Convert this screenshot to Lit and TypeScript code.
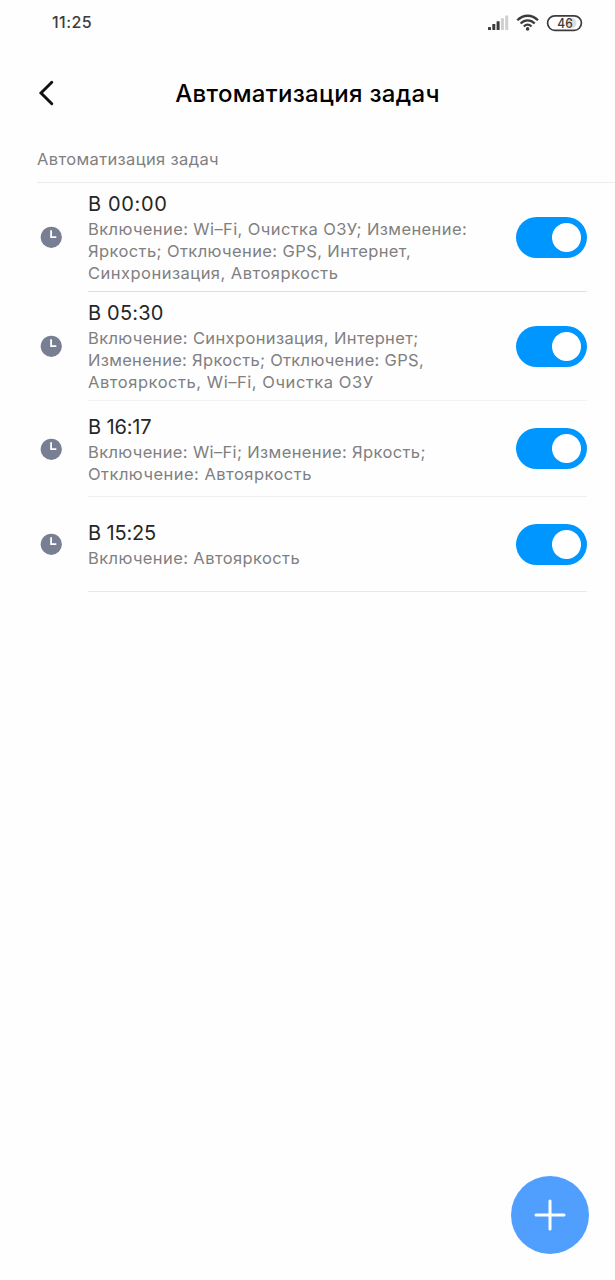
import { LitElement, html, css, svg } from "lit";
import { customElement, property, state } from "lit/decorators.js";

interface Line { text: string; track: number; }
interface Task { title: string; track: number; height: number; divider: string; lines: Line[]; on: boolean; }

@customElement("task-switch")
class TaskSwitch extends LitElement {
  @property({ type: Boolean }) on = false;
  static styles = css`
    :host { display: block; flex: none; }
    .track { box-sizing: border-box; width: 71px; height: 41px; border-radius: 21px; background: #dcdcdc; padding: 6px; display: flex; cursor: pointer; }
    .track.on { background: #0096ff; justify-content: flex-end; }
    .knob { width: 29px; height: 29px; border-radius: 50%; background: #fff; }
  `;
  render() {
    return html`<div class="track ${this.on ? "on" : ""}" role="switch" aria-checked=${this.on}><div class="knob"></div></div>`;
  }
}

@customElement("app-root")
class AppRoot extends LitElement {
  @state() tasks: Task[] = [
    { title: "В 00:00", track: 0.65, height: 108, divider: "#e0e0e0", on: true, lines: [
      { text: "Включение: Wi–Fi, Очистка ОЗУ; Изменение:", track: 0.4 },
      { text: "Яркость; Отключение: GPS, Интернет,", track: 0.4 },
      { text: "Синхронизация, Автояркость", track: 0.48 }] },
    { title: "В 05:30", track: 0.2, height: 108, divider: "#f2f2f2", on: true, lines: [
      { text: "Включение: Синхронизация, Интернет;", track: 0.36 },
      { text: "Изменение: Яркость; Отключение: GPS,", track: 0.3 },
      { text: "Автояркость, Wi–Fi, Очистка ОЗУ", track: 0.55 }] },
    { title: "В 16:17", track: -0.15, height: 95, divider: "#f0f0f0", on: true, lines: [
      { text: "Включение: Wi–Fi; Изменение: Яркость;", track: 0.36 },
      { text: "Отключение: Автояркость", track: 0.47 }] },
    { title: "В 15:25", track: -0.15, height: 94, divider: "#e9e9e9", on: true, lines: [
      { text: "Включение: Автояркость", track: 0.4 }] },
  ];

  static styles = css`
    :host { display: block; font-family: Inter, "Noto Sans", sans-serif; color: #000; }
    .screen { box-sizing: border-box; height: 1280px; background: #fefefe; display: flex; flex-direction: column; overflow: hidden; }
    .status { height: 46px; padding: 0 31px 0 52px; display: flex; align-items: center; justify-content: space-between; flex: none; }
    .time { font-size: 16px; font-weight: 500; letter-spacing: 0.45px; line-height: 44px; height: 46px; color: #3c3c3c; }
    .indicators { display: block; }
    .level { font-size: 13px; font-weight: 500; fill: #3c3c3c; }
    .header { height: 94px; padding: 0 36px; display: grid; grid-template-columns: 24px 1fr 24px; align-items: center; flex: none; }
    .back { display: block; }
    .heading { margin: 0; font-size: 24px; font-weight: 500; letter-spacing: 0.32px; text-align: center; white-space: nowrap; line-height: 32px; padding-top: 1px; }
    .section { height: 42px; margin-left: 37px; border-bottom: 1px solid #ececec; font-size: 16.5px; line-height: 38px; letter-spacing: 0.36px; color: #808080; flex: none; }
    .task { display: flex; padding: 0 28px 0 40px; flex: none; }
    .icon { width: 48px; flex: none; display: flex; align-items: center; }
    .body { flex: 1; display: flex; align-items: center; justify-content: space-between; border-bottom: 1px solid; }
    .title { font-size: 20px; line-height: 28px; color: #262626; white-space: nowrap; }
    .line { font-size: 16.5px; line-height: 22px; color: #808080; white-space: nowrap; }
    .spacer { flex: 1; }
    .actions { display: flex; justify-content: flex-end; padding: 0 26px 26px 0; }
    .add { width: 78px; height: 78px; border-radius: 50%; background: #509fff; display: flex; align-items: center; justify-content: center; cursor: pointer; }
  `;

  private bars() {
    return [0, 1, 2, 3, 4].map(i => {
      const h = 3 + i * 2.9;
      return svg`<rect x=${1 + i * 4.3} y=${17 - h} width="3" height=${h} rx="0.5" fill=${i < 3 ? "#3c3c3c" : "#cfcfcf"} />`;
    });
  }

  render() {
    return html`
      <div class="screen">
        <div class="status">
          <div class="time">11:25</div>
          <svg class="indicators" width="97" height="20" viewBox="0 0 97 20">
            ${this.bars()}
            <g fill="none" stroke="#3c3c3c" stroke-width="2.3">
              <path d="M30.3 7.3C36.3 1.2 45 1.2 51 7.3" />
              <path d="M33.6 10.5C37.8 6.3 43.5 6.3 47.7 10.5" />
              <path d="M36.8 13.5C39.2 11.2 42.1 11.2 44.5 13.5" />
            </g>
            <circle cx="40.6" cy="15.9" r="1.8" fill="#3c3c3c" />
            <circle cx="84.5" cy="10" r="5" fill="#dedede" />
            <rect x="60.6" y="2.8" width="33.8" height="14.6" rx="7.3" fill="none" stroke="#3c3c3c" stroke-width="1.7" />
            <text class="level" x="78" y="14.8" text-anchor="middle" textLength="15.5" lengthAdjust="spacingAndGlyphs">46</text>
          </svg>
        </div>
        <div class="header">
          <svg class="back" width="24" height="28" viewBox="0 0 24 28">
            <path d="M15.8 3.3L5 14L15.8 24.7" fill="none" stroke="#111" stroke-width="2.9" stroke-linecap="round" stroke-linejoin="miter" />
          </svg>
          <h1 class="heading">Автоматизация задач</h1>
        </div>
        <div class="section">Автоматизация задач</div>
        ${this.tasks.map(t => html`
          <div class="task">
            <div class="icon">
              <svg width="23" height="23" viewBox="0 0 23 23">
                <circle cx="11.3" cy="11.3" r="10.6" fill="#797f93" />
                <path d="M11.1 4.2v7h5.2" fill="none" stroke="#fff" stroke-width="1.8" />
              </svg>
            </div>
            <div class="body" style="height:${t.height}px;border-color:${t.divider}">
              <div>
                <div class="title" style="letter-spacing:${t.track}px">${t.title}</div>
                ${t.lines.map(l => html`<div class="line" style="letter-spacing:${l.track}px">${l.text}</div>`)}
              </div>
              <task-switch ?on=${t.on}></task-switch>
            </div>
          </div>`)}
        <div class="spacer"></div>
        <div class="actions">
          <div class="add" role="button">
            <svg width="32" height="32" viewBox="0 0 32 32">
              <path d="M16 2v28M2 16h28" stroke="#fff" stroke-width="3" stroke-linecap="round" />
            </svg>
          </div>
        </div>
      </div>`;
  }
}
